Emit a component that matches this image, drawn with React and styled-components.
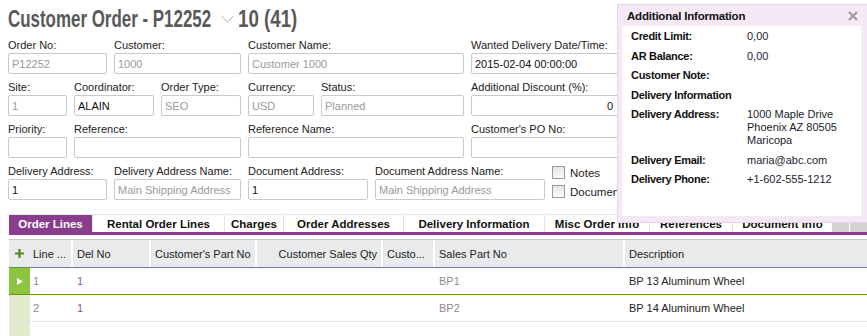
import React from 'react';
import styled, { createGlobalStyle } from 'styled-components';

const GlobalStyle = createGlobalStyle`
  html, body { margin: 0; padding: 0; background: #fff; }
  body {
    font-family: "Liberation Sans", Arial, sans-serif;
    font-size: 11px;
    color: #222;
  }
  * { box-sizing: border-box; }
`

const Page = styled.div`
  position: relative;
  width: 867px;
  height: 336px;
  overflow: hidden;
  display: flex;
  flex-direction: column;
`

const TitleBar = styled.div`
  display: flex;
  align-items: center;
  height: 38px;
  padding-left: 8px;
`

// fixed slot so the squeezed text below keeps its place in the row
const TitleSlot = styled.span`
  display: inline-block;
  width: ${props => props.$w}px;
  height: 28px;
  overflow: visible;
`

// the reference title font is a condensed bold face, so squeeze Liberation Sans Bold
const TitleText = styled.span`
  display: inline-block;
  font-weight: bold;
  font-size: 24px;
  line-height: 28px;
  color: #595959;
  white-space: nowrap;
  transform: scaleX(${props => props.$s});
  transform-origin: left center;
`

const Chevron = styled.svg`
  width: 13px;
  height: 9px;
  margin: 1px 4px 0 8px;
`

const Form = styled.div`
  display: flex;
  flex-direction: column;
  gap: 6px;
  padding-left: 8px;
`

const Row = styled.div`
  display: flex;
  gap: 7px;
`

const Field = styled.div`
  display: flex;
  flex-direction: column;
  width: ${props => props.$w}px;
  flex-shrink: 0;
`

const Label = styled.label`
  height: 14px;
  line-height: 14px;
  margin-bottom: 1px;
  white-space: nowrap;
  color: #222;
`

const Input = styled.input`
  height: 21px;
  width: 100%;
  border: 1px solid #c9c9c9;
  border-radius: 2px;
  padding: 0 ${props => props.$right ? '7px' : '3px'} 0 3px;
  font: inherit;
  color: ${props => props.$muted ? '#9a9a9a' : '#111'};
  text-align: ${props => props.$right ? 'right' : 'left'};
  background: #fff;
  outline: none;
`

const Checks = styled.div`
  display: flex;
  flex-direction: column;
  gap: 6px;
  padding-top: 2px;
`

const CheckRow = styled.div`
  display: flex;
  align-items: center;
  gap: 5px;
  height: 13px;
  font-size: 11.5px;
  white-space: nowrap;
`

const Box = styled.span`
  width: 13px;
  height: 13px;
  border: 1px solid #9b9b9b;
  background: linear-gradient(#e6e6e6, #fafafa);
`

const TabBar = styled.div`
  display: flex;
  margin: 14px 0 0 9px;
  border-top: 1px solid #e8e8e8;
  border-bottom: 3px solid #8a3d8d;
  height: 21px;
`

const TabStrip = styled.div`
  display: flex;
  flex: 1;
  overflow: hidden;
`

const Tab = styled.div`
  flex: 0 0 ${props => props.$w}px;
  display: flex;
  align-items: center;
  justify-content: center;
  padding-top: 1px;
  font-weight: bold;
  font-size: 11.5px;
  white-space: nowrap;
  overflow: hidden;
  color: ${props => props.$active ? '#fff' : '#111'};
  background: ${props => props.$active ? '#8a3d8d' : '#fff'};
  border-right: 1px solid #e3e3e3;
`

const ScrollButton = styled.div`
  width: 18px;
  background: #d3d3d3;
  border-left: 1px solid #fff;
  margin-top: 3px;
`

const Grid = styled.div`
  flex: 1;
  margin: 4px 0 0 9px;
  display: flex;
  flex-direction: column;
  border-top: 1px solid #c8c8c8;
  background: linear-gradient(to right, #e1ebcb 21px, #fff 21px);
`

const GridRow = styled.div`
  display: flex;
  height: ${props => props.$head ? 28 : 27}px;
  border-bottom: 1px solid ${props => props.$line};
  background: ${props => props.$head ? '#e9eaec' : 'transparent'};
`

const Selector = styled.div`
  flex: 0 0 21px;
  display: flex;
  align-items: center;
  justify-content: center;
  background: ${props => props.$bg || 'transparent'};
`

const Cell = styled.div`
  flex: ${props => props.$w ? `0 0 ${props.$w}px` : '1'};
  display: flex;
  align-items: center;
  justify-content: ${props => props.$right ? 'flex-end' : 'flex-start'};
  padding: 0 4px 0 ${props => props.$first ? 3 : 4}px;
  border-left: ${props => props.$first ? 0 : 2}px solid ${props => props.$head ? '#fff' : 'transparent'};
  white-space: nowrap;
  overflow: hidden;
  color: ${props => props.$color || '#222'};
  background: ${props => props.$head ? 'transparent' : '#fff'};
`

const Panel = styled.div`
  position: absolute;
  left: 617px;
  top: 4px;
  width: 252px;
  height: 219px;
  background: #f5e9f5;
  border: 1px solid #e6d3e6;
  display: flex;
  flex-direction: column;
  padding: 0 7px 6px 4px;
`

const PanelHead = styled.div`
  height: 21px;
  display: flex;
  align-items: center;
  justify-content: space-between;
  padding: 0 3px 0 5px;
  font-weight: bold;
  font-size: 11.5px;
  letter-spacing: -0.2px;
  color: #111;
`

const PanelBody = styled.div`
  flex: 1;
  background: #fff;
  display: grid;
  grid-template-columns: 116px 1fr;
  row-gap: 6.5px;
  align-content: start;
  padding: 4px 0 0 9px;
  line-height: 13px;
`

const Key = styled.div`
  font-weight: bold;
  letter-spacing: -0.3px;
  color: #111;
  grid-column: ${props => props.$span ? '1 / span 2' : 'auto'};
`

const Value = styled.div`
  color: #1c1c2e;
`

const formRows = [
  [
    { label: 'Order No:', w: 99, value: 'P12252', muted: true },
    { label: 'Customer:', w: 127, value: '1000', muted: true },
    { label: 'Customer Name:', w: 216, value: 'Customer 1000', muted: true },
    { label: 'Wanted Delivery Date/Time:', w: 150, value: '2015-02-04 00:00:00' },
  ],
  [
    { label: 'Site:', w: 59, value: '1', muted: true },
    { label: 'Coordinator:', w: 80, value: 'ALAIN' },
    { label: 'Order Type:', w: 80, value: 'SEO', muted: true },
    { label: 'Currency:', w: 66, value: 'USD', muted: true },
    { label: 'Status:', w: 143, value: 'Planned', muted: true },
    { label: 'Additional Discount (%):', w: 150, value: '0', right: true },
  ],
  [
    { label: 'Priority:', w: 59, value: '' },
    { label: 'Reference:', w: 167, value: '' },
    { label: 'Reference Name:', w: 216, value: '' },
    { label: "Customer's PO No:", w: 150, value: '' },
  ],
  [
    { label: 'Delivery Address:', w: 99, value: '1' },
    { label: 'Delivery Address Name:', w: 127, value: 'Main Shipping Address', muted: true },
    { label: 'Document Address:', w: 120, value: '1' },
    { label: 'Document Address Name:', w: 170, value: 'Main Shipping Address', muted: true },
  ],
]

const tabs = [
  { name: 'Order Lines', w: 84, active: true },
  { name: 'Rental Order Lines', w: 132 },
  { name: 'Charges', w: 59 },
  { name: 'Order Addresses', w: 120 },
  { name: 'Delivery Information', w: 141 },
  { name: 'Misc Order Info', w: 105 },
  { name: 'References', w: 83 },
  { name: 'Document Info', w: 100 },
]

const columns = [
  { title: 'Line ...', w: 41, first: true },
  { title: 'Del No', w: 78 },
  { title: "Customer's Part No", w: 106 },
  { title: 'Customer Sales Qty', w: 126, right: true },
  { title: 'Custo...', w: 52 },
  { title: 'Sales Part No', w: 190 },
  { title: 'Description' },
]

const lines = [
  { line: '1', del: '1', part: 'BP1', desc: 'BP 13 Aluminum Wheel', selected: true },
  { line: '2', del: '1', part: 'BP2', desc: 'BP 14 Aluminum Wheel' },
]

const info = [
  ['Credit Limit:', '0,00'],
  ['AR Balance:', '0,00'],
  ['Customer Note:', ''],
]

export default function App() {
  return (
    <Page>
      <GlobalStyle />
      <TitleBar>
        <TitleSlot $w={205}>
          <TitleText $s={0.705}>Customer Order - P12252</TitleText>
        </TitleSlot>
        <Chevron viewBox="0 0 13 9">
          <polyline points="1,1 6.5,7.5 12,1" fill="none" stroke="#b5b5b5" strokeWidth="1" />
        </Chevron>
        <TitleSlot $w={61}>
          <TitleText $s={0.78}>10 (41)</TitleText>
        </TitleSlot>
      </TitleBar>

      <Form>
        {formRows.map((row, i) => (
          <Row key={i}>
            {row.map(f => (
              <Field key={f.label} $w={f.w}>
                <Label>{f.label}</Label>
                <Input readOnly value={f.value} $muted={f.muted} $right={f.right} />
              </Field>
            ))}
            {i === 3 && (
              <Checks>
                <CheckRow><Box />Notes</CheckRow>
                <CheckRow><Box />Documents</CheckRow>
              </Checks>
            )}
          </Row>
        ))}
      </Form>

      <TabBar>
        <TabStrip>
          {tabs.map(t => (
            <Tab key={t.name} $w={t.w} $active={t.active}>{t.name}</Tab>
          ))}
        </TabStrip>
        <ScrollButton />
        <ScrollButton />
      </TabBar>

      <Grid>
        <GridRow $head $line="#6a8f27">
          <Selector>
            <svg width="9" height="9" viewBox="0 0 9 9">
              <path d="M4.5 0v9M0 4.5h9" stroke="#4e8a1c" strokeWidth="2.2" />
            </svg>
          </Selector>
          {columns.map(c => (
            <Cell key={c.title} $head $w={c.w} $first={c.first} $right={c.right}>{c.title}</Cell>
          ))}
        </GridRow>
        {lines.map(l => (
          <GridRow key={l.line} $line={l.selected ? '#6a8f27' : '#e3e3e3'}>
            <Selector $bg={l.selected ? '#8cc540' : undefined}>
              {l.selected && (
                <svg width="6" height="7" viewBox="0 0 6 7">
                  <path d="M0 0L6 3.5L0 7z" fill="#fff" />
                </svg>
              )}
            </Selector>
            <Cell $w={41} $first $color="#8c8c8c">{l.line}</Cell>
            <Cell $w={78} $color="#8d5a8d">{l.del}</Cell>
            <Cell $w={106} />
            <Cell $w={126} />
            <Cell $w={52} />
            <Cell $w={190} $color="#8c8c8c">{l.part}</Cell>
            <Cell>{l.desc}</Cell>
          </GridRow>
        ))}
      </Grid>

      <Panel>
        <PanelHead>
          Additional Information
          <svg width="10" height="10" viewBox="0 0 10 10">
            <path d="M1 1L9 9M9 1L1 9" stroke="#9e9e9e" strokeWidth="2.2" />
          </svg>
        </PanelHead>
        <PanelBody>
          {info.map(([k, v]) => (
            <React.Fragment key={k}>
              <Key>{k}</Key>
              <Value>{v}</Value>
            </React.Fragment>
          ))}
          <Key $span>Delivery Information</Key>
          <Key>Delivery Address:</Key>
          <Value>1000 Maple Drive<br />Phoenix AZ 80505<br />Maricopa</Value>
          <Key>Delivery Email:</Key>
          <Value>maria@abc.com</Value>
          <Key>Delivery Phone:</Key>
          <Value>+1-602-555-1212</Value>
        </PanelBody>
      </Panel>
    </Page>
  );
}
